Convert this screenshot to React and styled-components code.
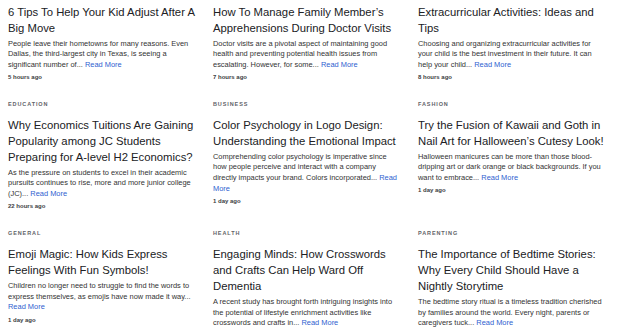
import React from "react";
import styled, { createGlobalStyle } from "styled-components";

const articles = [
  {
    category: "Parenting",
    title: "6 Tips To Help Your Kid Adjust After A Big Move",
    excerpt:
      "People leave their hometowns for many reasons. Even Dallas, the third-largest city in Texas, is seeing a significant number of...",
    time: "5 hours ago"
  },
  {
    category: "Health",
    title: "How To Manage Family Member\u2019s Apprehensions During Doctor Visits",
    excerpt:
      "Doctor visits are a pivotal aspect of maintaining good health and preventing potential health issues from escalating. However, for some...",
    time: "7 hours ago"
  },
  {
    category: "Education",
    title: "Extracurricular Activities: Ideas and Tips",
    excerpt:
      "Choosing and organizing extracurricular activities for your child is the best investment in their future. It can help your child...",
    time: "8 hours ago"
  },
  {
    category: "Education",
    title:
      "Why Economics Tuitions Are Gaining Popularity among JC Students Preparing for A-level H2 Economics?",
    excerpt:
      "As the pressure on students to excel in their academic pursuits continues to rise, more and more junior college (JC)...",
    time: "22 hours ago"
  },
  {
    category: "Business",
    title: "Color Psychology in Logo Design: Understanding the Emotional Impact",
    excerpt:
      "Comprehending color psychology is imperative since how people perceive and interact with a company directly impacts your brand. Colors incorporated...",
    time: "1 day ago"
  },
  {
    category: "Fashion",
    title: "Try the Fusion of Kawaii and Goth in Nail Art for Halloween\u2019s Cutesy Look!",
    excerpt:
      "Halloween manicures can be more than those blood-dripping art or dark orange or black backgrounds. If you want to embrace...",
    time: "1 day ago"
  },
  {
    category: "General",
    title: "Emoji Magic: How Kids Express Feelings With Fun Symbols!",
    excerpt:
      "Children no longer need to struggle to find the words to express themselves, as emojis have now made it way...",
    time: "1 day ago"
  },
  {
    category: "Health",
    title: "Engaging Minds: How Crosswords and Crafts Can Help Ward Off Dementia",
    excerpt:
      "A recent study has brought forth intriguing insights into the potential of lifestyle enrichment activities like crosswords and crafts in...",
    time: "1 day ago"
  },
  {
    category: "Parenting",
    title:
      "The Importance of Bedtime Stories: Why Every Child Should Have a Nightly Storytime",
    excerpt:
      "The bedtime story ritual is a timeless tradition cherished by families around the world. Every night, parents or caregivers tuck...",
    time: "1 day ago"
  }
];

export default function App() {
  return (
    <>
      <GlobalStyle />
      <Page>
        <Grid>
          {articles.map((a, i) => (
            <Card key={i}>
              <Category>{a.category}</Category>
              <Title>{a.title}</Title>
              <Excerpt>
                {a.excerpt} <ReadMore href="#">Read More</ReadMore>
              </Excerpt>
              <Time>{a.time}</Time>
            </Card>
          ))}
        </Grid>
      </Page>
    </>
  );
}

const GlobalStyle = createGlobalStyle`
  html, body {
    margin: 0;
    background: #ffffff;
    overflow: hidden;
  }
  body {
    font-family: "Liberation Sans", Arial, sans-serif;
  }
`;

const Page = styled.main`
  padding: 0 8px;
  height: 329px;
  overflow: hidden;
`;

// the page is scrolled a little: the first row's labels sit above the fold
const Grid = styled.div`
  display: grid;
  grid-template-columns: repeat(3, 193px);
  column-gap: 12px;
  row-gap: 19px;
  align-items: start;
  margin-top: -13px;
`;

const Card = styled.article`
  display: flex;
  flex-direction: column;
`;

const Category = styled.span`
  font-size: 5.5px;
  line-height: 8px;
  letter-spacing: 0.9px;
  text-transform: uppercase;
  color: #5f6368;
  font-weight: 700;
  margin-bottom: 8.5px;
`;

const Title = styled.h3`
  margin: 0 0 3px;
  font-size: 11.3px;
  line-height: 16px;
  font-weight: 400;
  color: #202124;
`;

const Excerpt = styled.p`
  margin: 0 0 2.6px;
  padding-right: 6px;
  font-size: 7.45px;
  line-height: 10.7px;
  color: #333333;
`;

const ReadMore = styled.a`
  color: #2f5fd0;
  text-decoration: none;
`;

const Time = styled.span`
  font-size: 6px;
  line-height: 8px;
  font-weight: 700;
  color: #3c4043;
`;
